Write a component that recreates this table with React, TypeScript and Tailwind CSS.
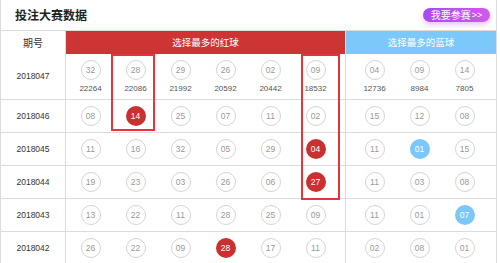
import React from "react";

type Ball = { n: string; hl?: boolean };
type Row = { period: string; red: Ball[]; blue: Ball[]; redCounts?: string[]; blueCounts?: string[] };

const b = (s: string): Ball[] =>
  s.split(" ").map((t) => (t.endsWith("*") ? { n: t.slice(0, -1), hl: true } : { n: t }));

const rows: Row[] = [
  {
    period: "2018047",
    red: b("32 28 29 26 02 09"),
    blue: b("04 09 14"),
    redCounts: ["22264", "22086", "21992", "20592", "20442", "18532"],
    blueCounts: ["12736", "8984", "7805"],
  },
  { period: "2018046", red: b("08 14* 25 07 11 02"), blue: b("15 12 08") },
  { period: "2018045", red: b("11 16 32 05 29 04*"), blue: b("11 01* 15") },
  { period: "2018044", red: b("19 23 03 26 06 27*"), blue: b("11 03 08") },
  { period: "2018043", red: b("13 22 11 28 25 09"), blue: b("11 01 07*") },
  { period: "2018042", red: b("26 22 09 28* 17 11"), blue: b("02 08 01") },
];

const digitFont = { fontFamily: '"Liberation Sans", Arial, sans-serif' };

function BallView({ ball, color }: { ball: Ball; color: "red" | "blue" }) {
  if (ball.hl) {
    return (
      <div
        className={`flex h-[20px] w-[20px] items-center justify-center rounded-full text-[8.5px] text-white ${
          color === "red" ? "bg-[#c93030]" : "bg-[#7cc7f9]"
        }`}
        style={digitFont}
      >
        {ball.n}
      </div>
    );
  }
  return (
    <div
      className="flex h-[20px] w-[20px] items-center justify-center rounded-full border border-[#d4d4d4] bg-white text-[8.5px] text-[#999]"
      style={digitFont}
    >
      {ball.n}
    </div>
  );
}

function Cell({ ball, count, color }: { ball: Ball; count?: string; color: "red" | "blue" }) {
  return (
    <div className="flex w-[45px] flex-col items-center justify-center">
      <BallView ball={ball} color={color} />
      {count && (
        <div className="mt-[4px] text-[8px] leading-[10px] text-[#555]" style={digitFont}>
          {count}
        </div>
      )}
    </div>
  );
}

export default function App() {
  return (
    <div
      className="relative h-[263px] w-[500px] overflow-hidden bg-white"
      style={{ fontFamily: '"Noto Sans CJK SC", "Liberation Sans", sans-serif' }}
    >
      <div className="w-[497px] border-x border-[#dcdcdc]">
        {/* Title */}
        <div className="flex h-[31px] items-center justify-between border-b border-[#dcdcdc] pl-[14px] pr-[6px]">
          <div className="text-[12px] font-bold leading-none text-[#222]">投注大赛数据</div>
          <div className="flex h-[14px] w-[67px] shrink-0 items-center justify-center whitespace-nowrap rounded-full bg-gradient-to-r from-[#a64af3] to-[#d25ae9] text-[10px] leading-none text-white shadow-[0_3px_5px_rgba(214,90,220,0.35)]">
            我要参赛
            <span className="ml-[1px] text-[9px]" style={digitFont}>
              &gt;&gt;
            </span>
          </div>
        </div>
        {/* Header */}
        <div className="flex h-[23px]">
          <div className="flex w-[65px] items-center justify-center border-r border-[#dcdcdc] text-[10px] text-[#333]">
            期号
          </div>
          <div className="flex w-[279px] items-center justify-center bg-[#cd3434] text-[9.5px] text-white">
            选择最多的红球
          </div>
          <div className="w-[1px] bg-[#e8e8e8]" />
          <div className="flex flex-1 items-center justify-center bg-[#7dc8fb] text-[9.5px] text-white">
            选择最多的蓝球
          </div>
        </div>
        {/* Rows */}
        {rows.map((r, i) => (
          <div
            key={r.period}
            className={`flex border-b border-[#dcdcdc] ${i === 0 ? "h-[46px]" : "h-[33px]"}`}
          >
            <div
              className="flex w-[65px] items-center justify-center border-r border-[#dcdcdc] text-[8.5px] text-[#333]"
              style={digitFont}
            >
              {r.period}
            </div>
            <div className={`flex w-[280px] border-r border-[#dcdcdc] pl-[2px] ${i === 0 ? "pt-[1px]" : ""}`}>
              {r.red.map((ball, j) => (
                <Cell key={j} ball={ball} count={r.redCounts?.[j]} color="red" />
              ))}
            </div>
            <div className={`flex flex-1 pl-[6px] ${i === 0 ? "pt-[1px]" : ""}`}>
              {r.blue.map((ball, j) => (
                <Cell key={j} ball={ball} count={r.blueCounts?.[j]} color="blue" />
              ))}
            </div>
          </div>
        ))}
      </div>
      {/* Highlight boxes */}
      <div className="absolute left-[111px] top-[54px] h-[77px] w-[44px] border-2 border-[#e8333a]" />
      <div className="absolute left-[301px] top-[54px] h-[146px] w-[39px] border-2 border-[#e8333a]" />
    </div>
  );
}
